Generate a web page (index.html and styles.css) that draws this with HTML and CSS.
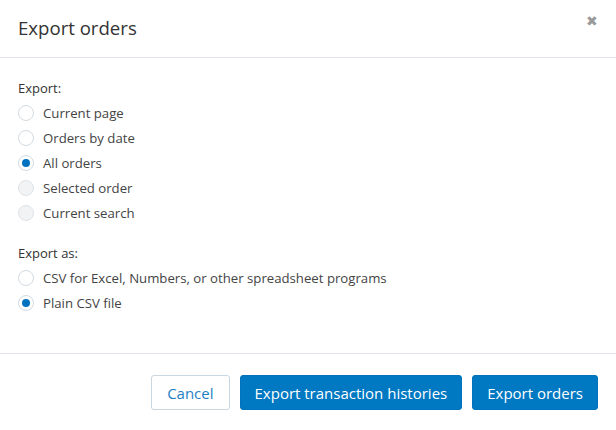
FILE: index.html
```html
<!DOCTYPE html>
<html>
<head>
<meta charset="utf-8">
<link rel="stylesheet" href="styles.css">
</head>
<body>
<div class="modal">
  <div class="header">
    <h1 class="title">Export orders</h1>
    <span class="close">&#x2716;</span>
  </div>
  <div class="body">
    <div class="group-label">Export:</div>
    <div class="options">
      <label class="opt"><span class="radio"></span>Current page</label>
      <label class="opt"><span class="radio"></span>Orders by date</label>
      <label class="opt"><span class="radio checked"></span>All orders</label>
      <label class="opt"><span class="radio disabled"></span>Selected order</label>
      <label class="opt"><span class="radio disabled"></span>Current search</label>
    </div>
    <div class="group-label second">Export as:</div>
    <div class="options">
      <label class="opt"><span class="radio"></span>CSV for Excel, Numbers, or other spreadsheet programs</label>
      <label class="opt"><span class="radio checked"></span>Plain CSV file</label>
    </div>
  </div>
  <div class="footer">
    <button class="btn secondary">Cancel</button>
    <button class="btn primary">Export transaction histories</button>
    <button class="btn primary">Export orders</button>
  </div>
</div>
</body>
</html>
```
FILE: styles.css
```css
* { box-sizing: border-box; }
html, body { margin: 0; padding: 0; background: #fff; }
body { font-family: "Open Sans", "Liberation Sans", sans-serif; color: #333; }
.modal { width: 616px; height: 430px; display: flex; flex-direction: column; }
.header {
  height: 58px;
  border-bottom: 1px solid #dfe3e8;
  display: flex; align-items: center; justify-content: space-between;
  padding: 0 18px 2px 18px;
}
.title { margin: 0; font-size: 18.6px; font-weight: 400; color: #333; }
.close { color: #999; font-size: 14px; margin-top: -14px; margin-right: 0; }
.body { padding: 20px 18px 0 18px; height: 296px; border-bottom: 1px solid #dfe3e8; }
.group-label { font-size: 13px; line-height: 20px; margin-bottom: 2px; color: #333; }
.group-label.second { margin-top: 18px; }
.options { display: flex; flex-direction: column; }
.opt { display: flex; align-items: center; height: 25px; font-size: 13.2px; color: #444; }
.radio {
  width: 16px; height: 16px; border-radius: 50%;
  border: 1px solid #d3dbe2; background: #fff;
  margin-right: 9px; flex: none; position: relative;
}
.radio.disabled { background: #f1f3f5; border-color: #dfe3e8; }
.radio.checked::after {
  content: ""; position: absolute; left: 3px; top: 3px;
  width: 8px; height: 8px; border-radius: 50%; background: #0073c0;
}
.footer {
  display: flex; justify-content: flex-end; gap: 10px;
  padding: 21px 18px 0 0;
}
.btn {
  height: 35px; font-family: inherit; font-size: 15px;
  border-radius: 3px; padding: 0 14px; cursor: pointer;
}
.btn.primary { background: #0078c2; color: #fff; border: 1px solid #0073bb; }
.btn.secondary { background: #fff; color: #1f7fc4; border: 1px solid #c9d7e2; padding: 0 15px; }
```
